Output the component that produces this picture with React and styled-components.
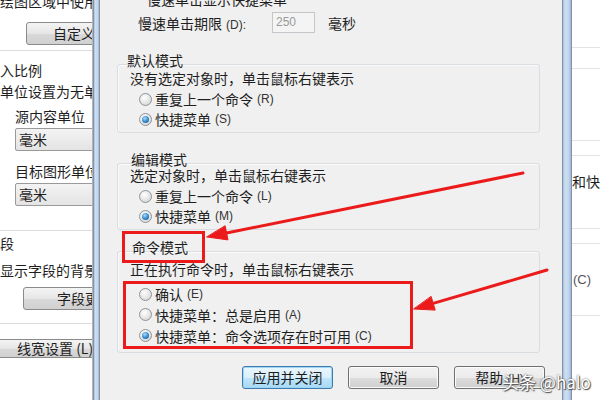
import styled, { createGlobalStyle } from "styled-components";

const GlobalStyle = createGlobalStyle`
  html, body {
    margin: 0;
    padding: 0;
    background: #fff;
  }
  body {
    font-family: "Noto Sans CJK SC", "Noto Sans", sans-serif;
    font-size: 14px;
    color: #1e1e1e;
  }
`;

const Screen = styled.div`
  position: relative;
  width: 600px;
  height: 400px;
  overflow: hidden;
  display: flex;
  background: #fff;
`;

/* ---------- left window behind the dialog ---------- */

const LeftPanel = styled.div`
  width: 92px;
  flex: none;
  overflow: hidden;
  background: #fff;
  border-right: 1px solid #b4b4b4;
  display: flex;
  flex-direction: column;
  white-space: nowrap;
`;

const LeftText = styled.div`
  line-height: 16px;
  margin-top: ${(p) => p.$top || 0}px;
  margin-left: ${(p) => p.$left || 0}px;
`;

const LeftButton = styled.div`
  flex: none;
  height: ${(p) => p.$h || 23}px;
  width: 140px;
  box-sizing: border-box;
  margin-top: ${(p) => p.$top || 0}px;
  margin-left: ${(p) => p.$left || 0}px;
  padding-left: ${(p) => p.$pad || 0}px;
  border: 1px solid #8a8a8a;
  border-radius: 3px;
  background: linear-gradient(#f4f4f4, #e6e6e6 50%, #d9d9d9 51%, #d0d0d0);
  line-height: ${(p) => (p.$h || 23) - 2}px;
`;

const LeftSelect = styled.div`
  flex: none;
  height: 23px;
  width: 120px;
  box-sizing: border-box;
  margin-top: ${(p) => p.$top || 0}px;
  margin-left: 15px;
  padding-left: 3px;
  border: 1px solid #9a9a9a;
  border-radius: 2px;
  background: linear-gradient(#f3f3f3, #e4e4e4);
  line-height: 21px;
`;

const LeftRule = styled.div`
  flex: none;
  height: 1px;
  margin-top: ${(p) => p.$top || 0}px;
  background: #dcdcdc;
`;

/* ---------- dialog ---------- */

const Dialog = styled.div`
  width: 479px;
  flex: none;
  display: flex;
`;

const FrameSide = styled.div`
  width: ${(p) => p.$w}px;
  flex: none;
  background: linear-gradient(90deg, #a9c0da, #cddff2 30%, #c2d6ec 70%, #9fb6d1);
  border-left: 1px solid #7f93ab;
  border-right: 1px solid #7f93ab;
  box-sizing: border-box;
`;

const Content = styled.div`
  flex: 1;
  background: #f0f0f0;
  display: flex;
  flex-direction: column;
  white-space: nowrap;
  overflow: hidden;
`;

const CutLine = styled.div`
  line-height: 18px;
  margin-top: -10px;
  padding-left: 47px;
`;

const DelayRow = styled.div`
  display: flex;
  align-items: center;
  height: 21px;
  margin-top: 4px;
  padding-left: 38px;
`;

const DelayLabel = styled.span`
  width: 134px;
`;

const NumberBox = styled.div`
  width: 43px;
  height: 21px;
  box-sizing: border-box;
  border: 1px solid #c3c7cb;
  background: #f4f4f4;
  color: #9a9a9a;
  font-family: "Liberation Sans", sans-serif;
  font-size: 12px;
  line-height: 19px;
  padding-left: 3px;
`;

const Unit = styled.span`
  margin-left: 13px;
`;

const Group = styled.div`
  margin: ${(p) => p.$top}px 22px 0 17px;
  display: flex;
  flex-direction: column;
`;

const GroupTitle = styled.div`
  position: relative;
  z-index: 1;
  line-height: 16px;
  padding-left: ${(p) => p.$left || 10}px;
  margin-bottom: -4px;
`;

const MarkedTitle = styled.div`
  position: relative;
  z-index: 1;
  align-self: flex-start;
  margin-left: 5px;
  margin-bottom: -12px;
  padding: 5px 14px 5px 7px;
  line-height: 16px;
  border: 3px solid #ec1b1b;
`;

const GroupBox = styled.div`
  border: 1px solid #d8dde2;
  border-radius: 3px;
  box-shadow: inset 1px 1px 0 #fbfbfb;
  padding: ${(p) => p.$top || 4}px 0 3px 12px;
  display: flex;
  flex-direction: column;
`;

const Hint = styled.div`
  line-height: 18px;
`;

const RadioList = styled.div`
  display: flex;
  flex-direction: column;
  margin-top: 2px;
  padding-left: 9px;
`;

const MarkedList = styled.div`
  display: flex;
  flex-direction: column;
  width: 290px;
  box-sizing: border-box;
  margin: 3px 0 0 -7px;
  padding-left: 13px;
  border: 3px solid #ec1b1b;
`;

const RadioRow = styled.div`
  display: flex;
  align-items: center;
  height: ${(p) => p.$h || 20}px;
`;

const RadioDot = styled.span`
  width: 13px;
  height: 13px;
  flex: none;
  box-sizing: border-box;
  border-radius: 50%;
  border: 1px solid #8f9499;
  background: radial-gradient(circle at 40% 35%, #ffffff, #e2e2e2 60%, #c9c9c9);
  margin-right: 3px;
  position: relative;

  &::after {
    content: "";
    display: ${(p) => (p.$on ? "block" : "none")};
    position: absolute;
    left: 2px;
    top: 2px;
    width: 7px;
    height: 7px;
    border-radius: 50%;
    background: radial-gradient(circle at 40% 35%, #a9dcfb, #2f86c9 55%, #174f8b);
  }
`;

const Key = styled.span`
  font-family: "Liberation Sans", sans-serif;
  font-size: 12px;
  margin-left: 4px;
  color: #333;
`;

const ButtonRow = styled.div`
  display: flex;
  gap: 15px;
  margin-top: 13px;
  padding-left: 142px;
`;

const Button = styled.div`
  width: 91px;
  height: 23px;
  box-sizing: border-box;
  border: 1px solid ${(p) => (p.$default ? "#3d7bad" : "#707070")};
  border-radius: 3px;
  background: ${(p) =>
    p.$default
      ? "linear-gradient(#eaf6fd, #d9f0fc 50%, #bee6fd 51%, #a7d9f5)"
      : "linear-gradient(#f2f2f2, #ebebeb 50%, #dddddd 51%, #cfcfcf)"};
  box-shadow: ${(p) => (p.$default ? "inset 0 0 0 1px #9fd6f5" : "inset 0 0 0 1px #fafafa")};
  text-align: center;
  line-height: 21px;
`;

/* ---------- right window behind the dialog ---------- */

const RightPanel = styled.div`
  flex: 1;
  background: #fff;
  display: flex;
  flex-direction: column;
  white-space: nowrap;
  overflow: hidden;
`;

const RightRule = styled.div`
  height: 1px;
  flex: none;
  background: #e2e2e2;
  margin-top: ${(p) => p.$top}px;
`;

const RightText = styled.div`
  line-height: 16px;
  margin-top: ${(p) => p.$top}px;
  padding-left: ${(p) => p.$left || 0}px;
  font-family: ${(p) => (p.$latin ? '"Liberation Sans", sans-serif' : "inherit")};
  font-size: ${(p) => (p.$latin ? 13 : 14)}px;
  color: ${(p) => (p.$latin ? "#555" : "#1e1e1e")};
`;

/* ---------- overlays ---------- */

const Annotations = styled.svg`
  position: absolute;
  left: 0;
  top: 0;
  pointer-events: none;
`;

const Watermark = styled.div`
  position: absolute;
  left: 502px;
  top: 371px;
  font-size: 17px;
  line-height: 22px;
  color: #fff;
  text-shadow: 0 0 2px #444, 1px 1px 1px #555;
  white-space: nowrap;
`;

function Radio({ on, label, keyName, h }) {
  return (
    <RadioRow $h={h}>
      <RadioDot $on={on} />
      {label}
      <Key>({keyName})</Key>
    </RadioRow>
  );
}

export default function App() {
  return (
    <Screen>
      <GlobalStyle />
      <LeftPanel>
        <LeftText $top={-7}>绘图区域中使用快捷菜单</LeftText>
        <LeftButton $top={13} $left={26} $pad={26}>自定义右键单击</LeftButton>
        <LeftRule $top={5} />
        <LeftText $top={11} $left={-14}>插入比例</LeftText>
        <LeftText $top={5}>单位设置为无单位时</LeftText>
        <LeftText $top={9} $left={15}>源内容单位</LeftText>
        <LeftSelect $top={4}>毫米</LeftSelect>
        <LeftText $top={12} $left={15}>目标图形单位</LeftText>
        <LeftSelect $top={4}>毫米</LeftSelect>
        <LeftRule $top={24} />
        <LeftText $top={4} $left={-14}>字段</LeftText>
        <LeftText $top={11}>显示字段的背景</LeftText>
        <LeftButton $top={9} $left={23} $pad={33}>字段更新设置</LeftButton>
        <LeftRule $top={13} />
        <LeftButton $top={15} $left={-3} $pad={19} $h={19}>线宽设置 (L)</LeftButton>
      </LeftPanel>

      <Dialog>
        <FrameSide $w={7} />
        <Content>
          <CutLine>慢速单击显示快捷菜单</CutLine>
          <DelayRow>
            <DelayLabel>
              慢速单击期限<Key>(D):</Key>
            </DelayLabel>
            <NumberBox>250</NumberBox>
            <Unit>毫秒</Unit>
          </DelayRow>

          <Group $top={19}>
            <GroupTitle>默认模式</GroupTitle>
            <GroupBox>
              <Hint>没有选定对象时，单击鼠标右键表示</Hint>
              <RadioList>
                <Radio label="重复上一个命令" keyName="R" />
                <Radio on label="快捷菜单" keyName="S" />
              </RadioList>
            </GroupBox>
          </Group>

          <Group $top={18}>
            <GroupTitle $left={14}>编辑模式</GroupTitle>
            <GroupBox $top={2}>
              <Hint>选定对象时，单击鼠标右键表示</Hint>
              <RadioList>
                <Radio label="重复上一个命令" keyName="L" />
                <Radio on label="快捷菜单" keyName="M" />
              </RadioList>
            </GroupBox>
          </Group>

          <Group $top={1}>
            <MarkedTitle>命令模式</MarkedTitle>
            <GroupBox $top={8}>
              <Hint>正在执行命令时，单击鼠标右键表示</Hint>
              <MarkedList>
                <Radio label="确认" keyName="E" />
                <Radio label="快捷菜单：总是启用" keyName="A" h={21} />
                <Radio on label="快捷菜单：命令选项存在时可用" keyName="C" h={21} />
              </MarkedList>
            </GroupBox>
          </Group>

          <ButtonRow>
            <Button $default>应用并关闭</Button>
            <Button>取消</Button>
            <Button>
              帮助<Key>(H)</Key>
            </Button>
          </ButtonRow>
        </Content>
        <FrameSide $w={10} />
      </Dialog>

      <RightPanel>
        <RightRule $top={47} />
        <RightRule $top={20} />
        <RightRule $top={71} />
        <RightRule $top={14} />
        <RightText $top={17}>和快捷</RightText>
        <RightRule $top={39} />
        <RightRule $top={14} />
        <RightText $top={28} $left={1} $latin>
          (C)
        </RightText>
        <RightRule $top={27} />
      </RightPanel>

      <Annotations width="600" height="400" viewBox="0 0 600 400">
        <g stroke="#ec1b1b" strokeWidth="3" strokeLinecap="round" fill="#ec1b1b">
          <line x1="523" y1="173" x2="226.6" y2="233" />
          <polygon points="207,237 228,239.9 225.2,226.1" strokeWidth="1" />
          <line x1="547" y1="270" x2="433.2" y2="303.4" />
          <polygon points="414,309 435.2,310.1 431.2,296.7" strokeWidth="1" />
        </g>
      </Annotations>
      <Watermark>头条 @halo</Watermark>
    </Screen>
  );
}
